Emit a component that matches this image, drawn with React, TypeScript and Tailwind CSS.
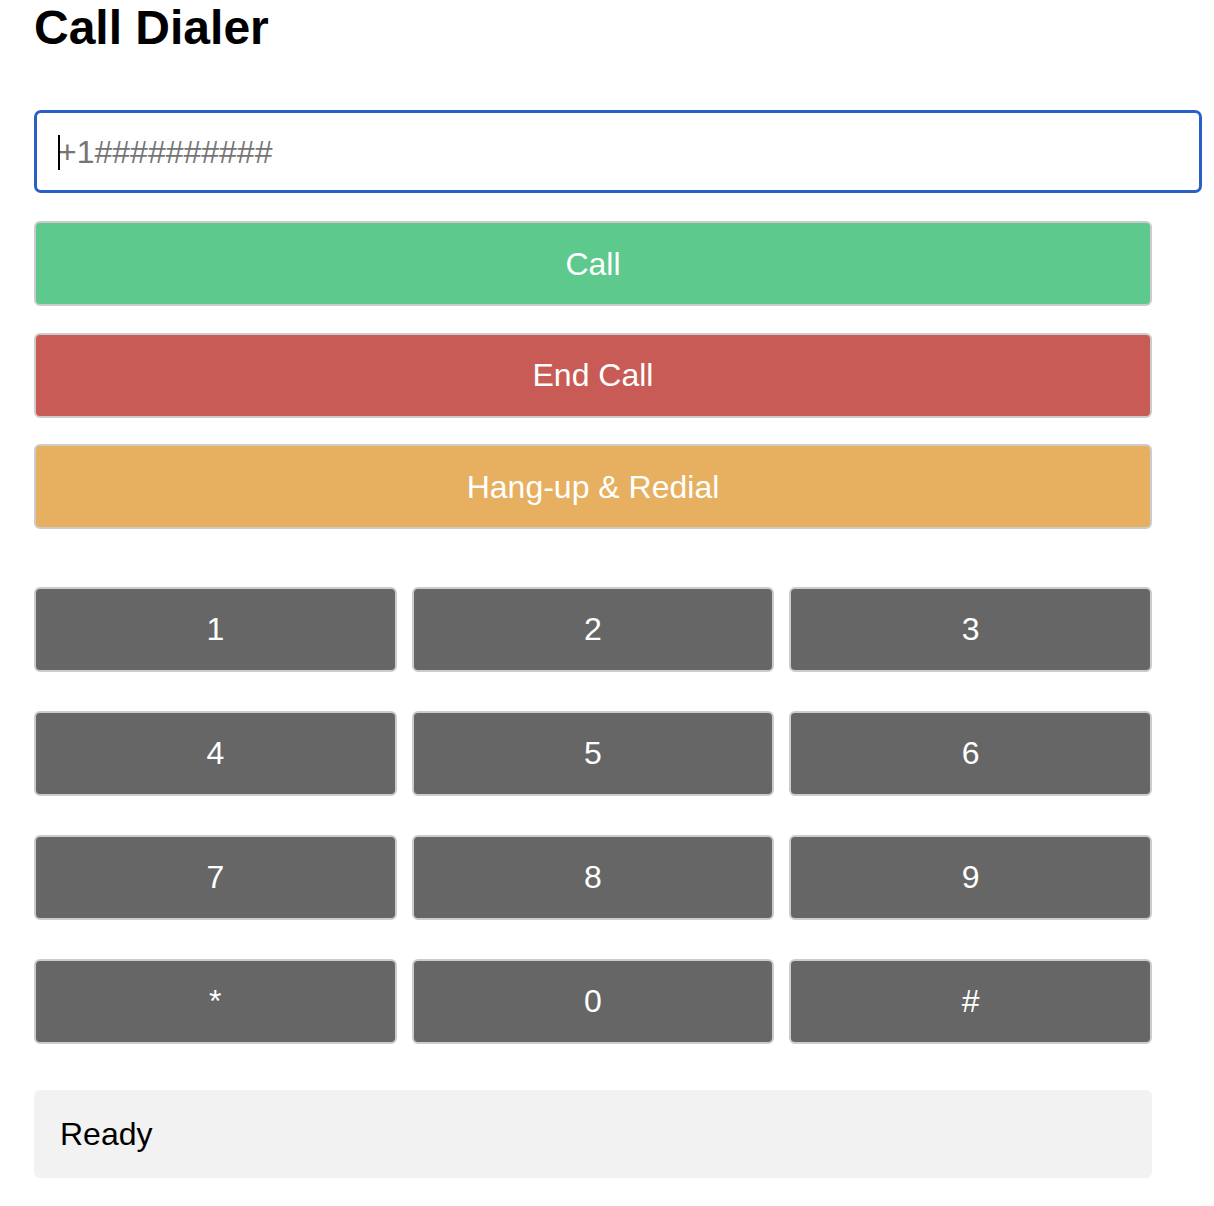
const keys = ['1', '2', '3', '4', '5', '6', '7', '8', '9', '*', '0', '#'];

function ActionButton({ label, color }: { label: string; color: string }) {
  return (
    <button
      className={`h-[85px] w-full rounded-[6px] border-2 border-[#cccccc] ${color} text-[32px] text-white`}
    >
      {label}
    </button>
  );
}

export default function App() {
  return (
    <div
      className="bg-white pl-[34px] pb-[28px] text-black"
      style={{ fontFamily: '"Liberation Sans", Arial, sans-serif' }}
    >
      <h1 className="text-[48px] font-bold leading-[55px]">Call Dialer</h1>

      {/* number input, wider than the rest like a content-box input */}
      <div className="relative mt-[55px] flex h-[83px] w-[1168px] items-center rounded-[7px] border-[3px] border-[#2b5fc8] pl-[21px]">
        <span className="absolute left-[21px] top-[22px] h-[35px] w-[2px] bg-black" />
        <input
          className="w-full bg-transparent text-[32px] text-black outline-none placeholder:text-[#757575]"
          placeholder="+1##########"
        />
      </div>

      <div className="w-[1118px]">
        <div className="mt-[28px] flex flex-col gap-[26.5px]">
          <ActionButton label="Call" color="bg-[#5dc98d]" />
          <ActionButton label="End Call" color="bg-[#c85b55]" />
          <ActionButton label="Hang-up &amp; Redial" color="bg-[#e6b060]" />
        </div>

        {/* keypad */}
        <div className="mt-[58px] grid grid-cols-3 gap-x-[15px] gap-y-[39.5px]">
          {keys.map((k) => (
            <button
              key={k}
              className="h-[84.5px] rounded-[6px] border-2 border-[#cccccc] bg-[#666666] text-[32px] text-white"
            >
              {k}
            </button>
          ))}
        </div>

        <div className="mt-[46px] flex h-[88px] items-center rounded-[6px] bg-[#f2f2f2] pl-[26px] text-[32px]">
          Ready
        </div>
      </div>
    </div>
  );
}
